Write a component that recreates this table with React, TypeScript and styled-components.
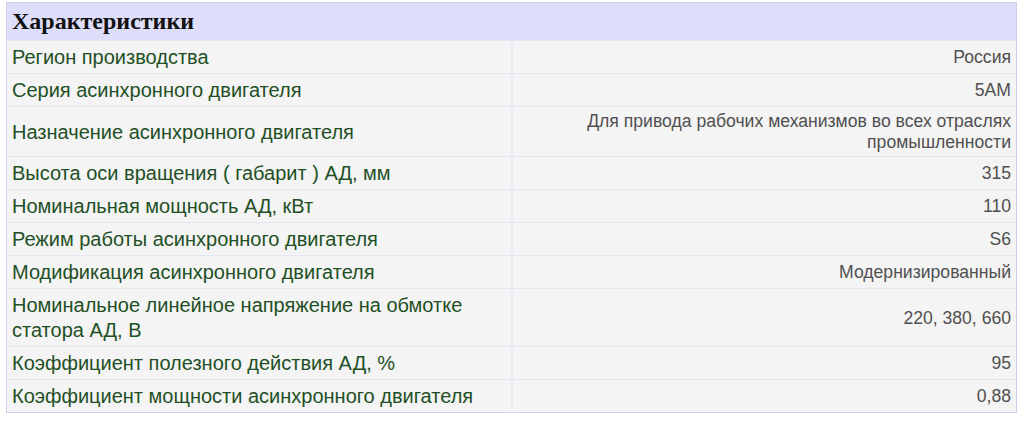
import React from 'react';
import styled, { createGlobalStyle } from 'styled-components';

const GlobalStyle = createGlobalStyle`
    body {
        margin: 0;
        background: #ffffff;
    }
`

type SpecType = {
    label: string
    value: string
}

const specs: SpecType[] = [
    { label: 'Регион производства', value: 'Россия' },
    { label: 'Серия асинхронного двигателя', value: '5АМ' },
    { label: 'Назначение асинхронного двигателя', value: 'Для привода рабочих механизмов во всех отраслях промышленности' },
    { label: 'Высота оси вращения ( габарит ) АД, мм', value: '315' },
    { label: 'Номинальная мощность АД, кВт', value: '110' },
    { label: 'Режим работы асинхронного двигателя', value: 'S6' },
    { label: 'Модификация асинхронного двигателя', value: 'Модернизированный' },
    { label: 'Номинальное линейное напряжение на обмотке статора АД, В', value: '220, 380, 660' },
    { label: 'Коэффициент полезного действия АД, %', value: '95' },
    { label: 'Коэффициент мощности асинхронного двигателя', value: '0,88' },
]

export default function App() {
    return (
        <Page>
            <GlobalStyle />
            <SpecTable>
                <thead>
                    <tr>
                        <HeadCell colSpan={2}>Характеристики</HeadCell>
                    </tr>
                </thead>
                <tbody>
                    {specs.map((s) => (
                        <tr key={s.label}>
                            <LabelCell>{s.label}</LabelCell>
                            <ValueCell>{s.value}</ValueCell>
                        </tr>
                    ))}
                </tbody>
            </SpecTable>
        </Page>
    );
}

const Page = styled.div`
    padding: 2px 8px 0 6px;
`

const SpecTable = styled.table`
    width: 1011px;
    border-collapse: collapse;
    border: 1px solid #cfcfe9;
    table-layout: fixed;
`

const HeadCell = styled.th`
    height: 37px;
    padding: 0 5px;
    background: #dfdefa;
    text-align: left;
    font-family: "Liberation Serif", "DejaVu Serif", serif;
    font-size: 24px;
    font-weight: bold;
    color: #111111;
    border-bottom: 1px solid #e6e6f4;
`

const LabelCell = styled.td`
    width: 50%;
    padding: 4px 5px 3px;
    background: #f4f4f4;
    border-top: 1px solid #e6e6f4;
    border-right: 2px solid #ebebf6;
    font-family: "Liberation Sans", Arial, sans-serif;
    font-size: 20px;
    line-height: 25px;
    color: #1f4f25;
    vertical-align: middle;
`

const ValueCell = styled.td`
    padding: 4px 5px 3px;
    background: #f4f4f4;
    border-top: 1px solid #e6e6f4;
    font-family: "Liberation Sans", Arial, sans-serif;
    font-size: 17.6px;
    line-height: 21px;
    color: #505050;
    text-align: right;
    vertical-align: middle;
`
